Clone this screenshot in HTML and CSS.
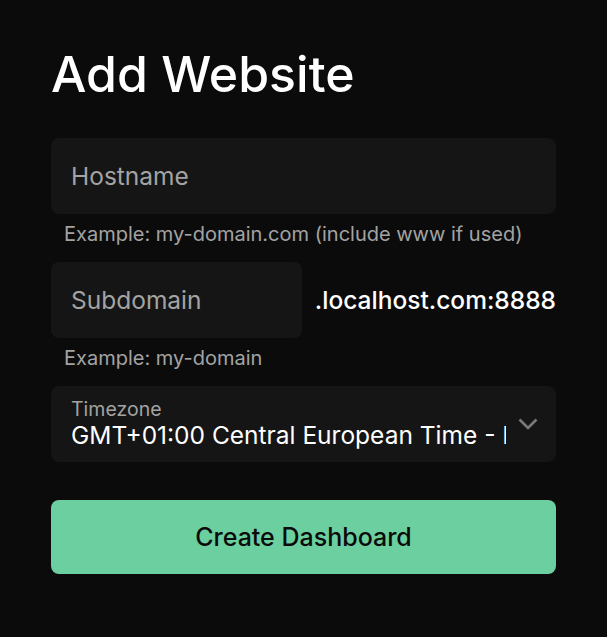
FILE: index.html
```html
<!DOCTYPE html>
<html>
<head>
<meta charset="utf-8">
<link rel="stylesheet" href="styles.css">
</head>
<body>
<main class="page">
  <h1 class="title">Add Website</h1>
  <form class="form">
    <div class="field">
      <div class="input"><span class="placeholder">Hostname</span></div>
      <p class="hint">Example: my-domain.com (include www if used)</p>
    </div>
    <div class="field">
      <div class="row">
        <div class="input input-sub"><span class="placeholder">Subdomain</span></div>
        <span class="suffix">.localhost.com:8888</span>
      </div>
      <p class="hint">Example: my-domain</p>
    </div>
    <div class="select">
      <div class="select-text">
        <span class="select-label">Timezone</span>
        <span class="select-value">GMT+01:00 Central European Time - Berlin</span>
      </div>
      <svg class="chev" width="20" height="12" viewBox="0 0 20 12"><path d="M1.5 1.5 L10 10 L18.5 1.5" fill="none" stroke="#7a7a7a" stroke-width="2.6"/></svg>
    </div>
    <button class="btn" type="button">Create Dashboard</button>
  </form>
</main>
</body>
</html>
```
FILE: styles.css
```css
html, body { margin: 0; padding: 0; }
body {
  background: #0b0b0b;
  font-family: Inter, "DejaVu Sans", sans-serif;
  width: 607px;
  height: 637px;
}
.page { padding: 44px 51px 0 51px; }
.title {
  margin: 0;
  color: #fff;
  font-size: 50px;
  font-weight: 500;
  line-height: 60px;
}
.form { margin-top: 34px; display: flex; flex-direction: column; }
.field { margin-bottom: 16px; }
.input {
  background: #151515;
  border-radius: 8px;
  height: 76px;
  display: flex;
  align-items: center;
  padding: 0 20px;
  box-sizing: border-box;
}
.placeholder { color: #a3a3a3; font-size: 24.5px; }
.hint { margin: 8px 0 0 13px; color: #a3a3a3; font-size: 20px; line-height: 24px; }
.row { display: flex; align-items: center; gap: 13px; }
.input-sub { width: 251px; }
.suffix { color: #fff; font-size: 24.5px; font-weight: 500; }
.select {
  background: #151515;
  border-radius: 8px;
  height: 76px;
  display: flex;
  align-items: center;
  padding: 0 18px 0 20px;
  box-sizing: border-box;
}
.select-text { flex: 1; display: flex; flex-direction: column; overflow: hidden; }
.select-label { color: #a3a3a3; font-size: 19.5px; line-height: 22px; }
.select-value { color: #fff; font-size: 24.5px; line-height: 30px; white-space: nowrap; overflow: hidden; }
.chev { flex: none; margin-left: 12px; margin-top: 0; }
.btn {
  margin-top: 38px;
  background: #6ccf9f;
  border: 0;
  border-radius: 8px;
  height: 74px;
  color: #0b0b0b;
  font-family: inherit;
  font-size: 25px;
  font-weight: 500;
}
```
